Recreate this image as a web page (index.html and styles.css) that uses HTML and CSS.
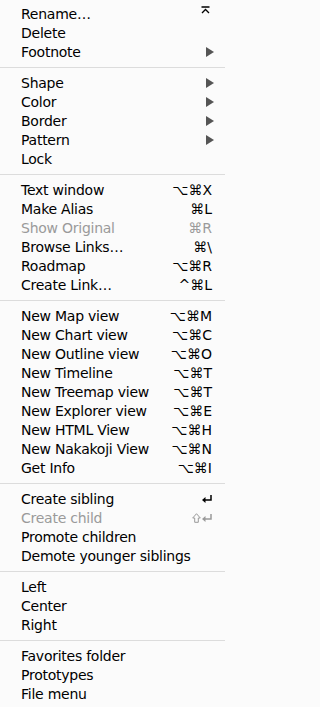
FILE: index.html
```html
<!DOCTYPE html>
<html>
<head>
<meta charset="utf-8">
<link rel="stylesheet" href="styles.css">
</head>
<body>
<div class="menu">
  <div class="item"><span class="label">Rename…</span><span class="key"><svg class="scroll" width="9" height="8" viewBox="0 0 9 8"><path d="M0.5 1H8.5M1 7L4.5 3.5L8 7" fill="none" stroke="#000" stroke-width="1.3"/></svg></span></div>
  <div class="item"><span class="label">Delete</span></div>
  <div class="item"><span class="label">Footnote</span><span class="arrow"></span></div>
  <div class="sep"></div>
  <div class="item"><span class="label">Shape</span><span class="arrow"></span></div>
  <div class="item"><span class="label">Color</span><span class="arrow"></span></div>
  <div class="item"><span class="label">Border</span><span class="arrow"></span></div>
  <div class="item"><span class="label">Pattern</span><span class="arrow"></span></div>
  <div class="item"><span class="label">Lock</span></div>
  <div class="sep"></div>
  <div class="item"><span class="label">Text window</span><span class="key">⌥⌘X</span></div>
  <div class="item"><span class="label">Make Alias</span><span class="key">⌘L</span></div>
  <div class="item disabled"><span class="label">Show Original</span><span class="key">⌘R</span></div>
  <div class="item"><span class="label">Browse Links…</span><span class="key">⌘\</span></div>
  <div class="item"><span class="label">Roadmap</span><span class="key">⌥⌘R</span></div>
  <div class="item"><span class="label">Create Link…</span><span class="key">^⌘L</span></div>
  <div class="sep"></div>
  <div class="item"><span class="label">New Map view</span><span class="key">⌥⌘M</span></div>
  <div class="item"><span class="label">New Chart view</span><span class="key">⌥⌘C</span></div>
  <div class="item"><span class="label">New Outline view</span><span class="key">⌥⌘O</span></div>
  <div class="item"><span class="label">New Timeline</span><span class="key">⌥⌘T</span></div>
  <div class="item"><span class="label">New Treemap view</span><span class="key">⌥⌘T</span></div>
  <div class="item"><span class="label">New Explorer view</span><span class="key">⌥⌘E</span></div>
  <div class="item"><span class="label">New HTML View</span><span class="key">⌥⌘H</span></div>
  <div class="item"><span class="label">New Nakakoji View</span><span class="key">⌥⌘N</span></div>
  <div class="item"><span class="label">Get Info</span><span class="key">⌥⌘I</span></div>
  <div class="sep"></div>
  <div class="item"><span class="label">Create sibling</span><span class="key"><svg width="10" height="8" viewBox="0 0 10 8"><path d="M9 0V5H3" fill="none" stroke="#000" stroke-width="1.5"/><path d="M0 5L3.5 2V8Z" fill="#000"/></svg></span></div>
  <div class="item disabled"><span class="label">Create child</span><span class="key"><svg width="9" height="10" viewBox="0 0 9 10"><path d="M4.5 0.7L0.7 5H2.7V9.3H6.3V5H8.3Z" fill="none" stroke="#9a9a9a" stroke-width="1"/></svg><svg width="10" height="8" viewBox="0 0 10 8"><path d="M9 0V5H3" fill="none" stroke="#9a9a9a" stroke-width="1.5"/><path d="M0 5L3.5 2V8Z" fill="#9a9a9a"/></svg></span></div>
  <div class="item"><span class="label">Promote children</span></div>
  <div class="item"><span class="label">Demote younger siblings</span></div>
  <div class="sep"></div>
  <div class="item"><span class="label">Left</span></div>
  <div class="item"><span class="label">Center</span></div>
  <div class="item"><span class="label">Right</span></div>
  <div class="sep"></div>
  <div class="item"><span class="label">Favorites folder</span></div>
  <div class="item"><span class="label">Prototypes</span></div>
  <div class="item"><span class="label">File menu</span></div>
</div>
</body>
</html>
```
FILE: styles.css
```css
html, body {
  margin: 0;
  padding: 0;
  background: #fbfbfb;
}
.menu {
  width: 225px;
  height: 707px;
  box-sizing: border-box;
  padding: 4px 0;
  background: #fbfbfb;
  font-family: "DejaVu Sans", "Liberation Sans", sans-serif;
  font-size: 14px;
  letter-spacing: -0.25px;
  color: #000;
}
.item {
  display: flex;
  align-items: center;
  height: 19px;
  padding: 0 11px 0 21px;
  white-space: nowrap;
}
.label {
  flex: 1;
}
.key {
  display: flex;
  align-items: center;
  gap: 1px;
  letter-spacing: 0;
  margin-right: 2px;
}
.disabled {
  color: #9a9a9a;
}
.arrow {
  width: 0;
  height: 0;
  border-top: 5px solid transparent;
  border-bottom: 5px solid transparent;
  border-left: 8px solid #555;
}
.scroll {
  margin-top: -8px;
  margin-right: 2px;
}
.sep {
  height: 12px;
  display: flex;
  align-items: center;
}
.sep::before {
  content: "";
  display: block;
  width: 100%;
  height: 1px;
  background: #dcdcdc;
}
```
